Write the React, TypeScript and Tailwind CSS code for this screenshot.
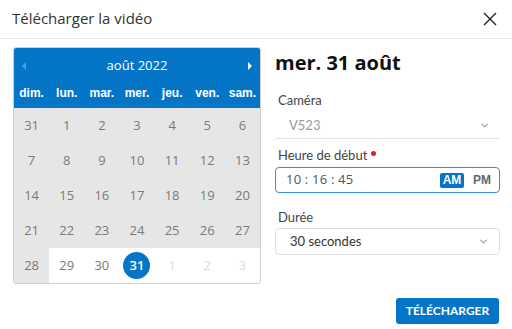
import { ChevronDown } from "lucide-react"

const blue = "bg-[#0576c7]"

type Day = { n: number; grey: boolean; out?: boolean; sel?: boolean }

const days: Day[] = [
    { n: 31, grey: true },
    ...Array.from({ length: 28 }, (_, i) => ({ n: i + 1, grey: true })),
    { n: 29, grey: false },
    { n: 30, grey: false },
    { n: 31, grey: false, sel: true },
    { n: 1, grey: false, out: true },
    { n: 2, grey: false, out: true },
    { n: 3, grey: false, out: true },
]

const weekdays = ["dim.", "lun.", "mar.", "mer.", "jeu.", "ven.", "sam."]

function Calendar() {
    return (
        <div className="w-[248px] border border-[#cfcfcf] rounded-[3px] overflow-hidden">
            <div className={`${blue} text-white`}>
                <div className="h-[33px] flex items-center justify-between px-[8px] pt-[2px]">
                    <span className="w-0 h-0 border-y-[4px] border-y-transparent border-r-[4px] border-r-[#4f9bd6]" />
                    <span className="text-[13px] font-['Open_Sans',sans-serif]">août 2022</span>
                    <span className="w-0 h-0 border-y-[4px] border-y-transparent border-l-[4px] border-l-white" />
                </div>
                <div className="grid grid-cols-7 h-[27px] items-center pb-[3px] font-['Liberation_Sans',sans-serif] font-bold text-[12px]">
                    {weekdays.map(w => (
                        <div key={w} className="text-center">{w}</div>
                    ))}
                </div>
            </div>
            <div className="grid grid-cols-7 font-['Open_Sans',sans-serif] text-[13px]">
                {days.map((d, i) => (
                    <div
                        key={i}
                        className={`h-[35px] flex items-center justify-center ${d.grey ? "bg-[#e6e6e6]" : "bg-white"}`}
                    >
                        {d.sel ? (
                            <span className={`${blue} w-[27px] h-[27px] rounded-full flex items-center justify-center text-white font-semibold`}>
                                {d.n}
                            </span>
                        ) : (
                            <span className={d.out ? "text-[#dcdcdc]" : "text-[#7a7a7a]"}>{d.n}</span>
                        )}
                    </div>
                ))}
            </div>
        </div>
    )
}

function Chevron() {
    return <ChevronDown size={11} strokeWidth={2.2} className="text-[#9a9a9a]" />
}

export default function App() {
    return (
        <div className="w-[512px] h-[329px] bg-white font-['Open_Sans',sans-serif] overflow-hidden">
            <header className="h-[39px] flex items-center justify-between pl-[12px] pr-[15px] border-b border-[#e6e6e6]">
                <h1 className="text-[15px] text-[#333] pb-[2px]">Télécharger la vidéo</h1>
                <svg width="14" height="14" viewBox="0 0 14 14" className="text-[#222]">
                    <path d="M1 1 L13 13 M13 1 L1 13" stroke="currentColor" strokeWidth="1.4" />
                </svg>
            </header>
            <div className="flex items-start gap-[14px] pl-[13px] pt-[8px]">
                <Calendar />
                <div className="w-[225px] flex flex-col font-['Lato',sans-serif]">
                    <h2 className="mt-[4px] h-[24px] leading-[24px] text-[20px] font-bold text-[#111] font-['Open_Sans',sans-serif]">mer. 31 août</h2>
                    <label className="mt-[16px] h-[18px] leading-[18px] text-[13px] text-[#444] pl-[3px]">Caméra</label>
                    <div className="mt-[4px] h-[26px] flex items-center justify-between pl-[14px] pr-[10px] border-b border-[#e3e3e3]">
                        <span className="text-[13px] text-[#9b9b9b]">V523</span>
                        <Chevron />
                    </div>
                    <label className="mt-[7px] h-[18px] leading-[18px] text-[13px] text-[#444] pl-[3px] flex items-center gap-[4px]">
                        Heure de début
                        <span className="w-[5px] h-[5px] rounded-full bg-[#e02020] -mt-[4px]" />
                    </label>
                    <div className="mt-[3px] h-[26px] flex items-center justify-between pl-[10px] pr-[8px] border border-[#3a8fd6] rounded-[4px]">
                        <span className="text-[13px] text-[#555] font-['Open_Sans',sans-serif] tracking-[0.2px]">10 : 16 : 45</span>
                        <div className="flex items-center gap-[9px] font-['Liberation_Sans',sans-serif] font-bold text-[12px]">
                            <span className={`${blue} text-white rounded-[2px] w-[24px] h-[15px] flex items-center justify-center`}>AM</span>
                            <span className="text-[#666]">PM</span>
                        </div>
                    </div>
                    <label className="mt-[15px] h-[18px] leading-[18px] text-[13px] text-[#444] pl-[3px]">Durée</label>
                    <div className="mt-[2px] h-[27px] flex items-center justify-between pl-[14px] pr-[10px] border border-[#e0e0e0] rounded-[4px]">
                        <span className="text-[13px] text-[#333]">30 secondes</span>
                        <Chevron />
                    </div>
                    <div className="flex justify-end mt-[43px] pr-[1px]">
                        <button className={`${blue} text-white h-[26px] w-[103px] rounded-[3px] text-[12px] font-bold`}>TÉLÉCHARGER</button>
                    </div>
                </div>
            </div>
        </div>
    )
}
